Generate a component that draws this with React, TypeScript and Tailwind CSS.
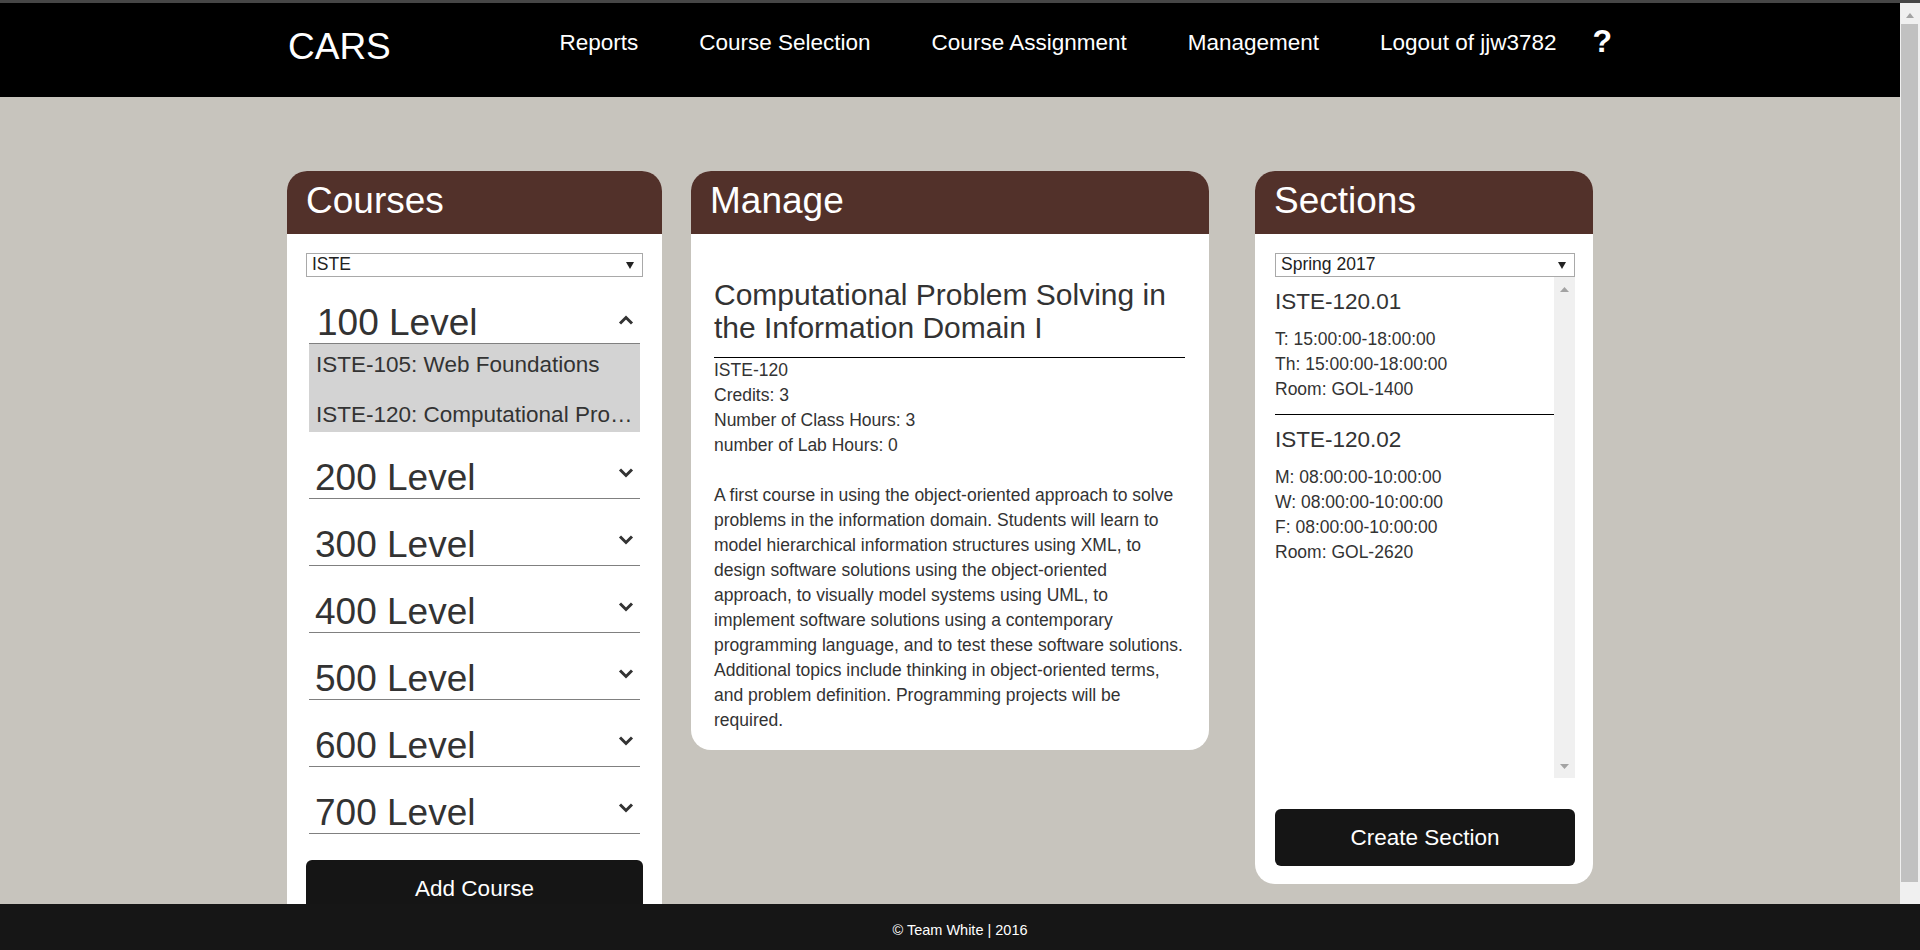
import React from "react";

const levels = ["200", "300", "400", "500", "600", "700"];

const description =
  "A first course in using the object-oriented approach to solve problems in the information domain. Students will learn to model hierarchical information structures using XML, to design software solutions using the object-oriented approach, to visually model systems using UML, to implement software solutions using a contemporary programming language, and to test these software solutions. Additional topics include thinking in object-oriented terms, and problem definition. Programming projects will be required.";

function Chevron({ up }: { up?: boolean }) {
  return (
    <svg
      width="16"
      height="10"
      viewBox="0 0 16 10"
      className={`mr-[6px] shrink-0 ${up ? "mb-[18px]" : "mb-[20px]"}`}
    >
      <polyline
        points={up ? "2,8.5 8,2.5 14,8.5" : "2,1.5 8,7.5 14,1.5"}
        fill="none"
        stroke="#333"
        strokeWidth="3"
      />
    </svg>
  );
}

function Select({ value }: { value: string }) {
  return (
    <div className="h-[24px] border border-[#a9a9a9] flex items-center justify-between pl-[5px] pr-[8px] text-[17.5px] leading-none text-[#222]">
      <span>{value}</span>
      <svg width="8" height="7" viewBox="0 0 8 7">
        <polygon points="0,0 8,0 4,7" fill="#222" />
      </svg>
    </div>
  );
}

function Arrow({ up }: { up?: boolean }) {
  return (
    <svg width="9" height="5" viewBox="0 0 9 5">
      <polygon points={up ? "0,5 9,5 4.5,0" : "0,0 9,0 4.5,5"} fill="#a3a3a3" />
    </svg>
  );
}

function Card({
  title,
  className,
  children,
}: {
  title: string;
  className?: string;
  children: React.ReactNode;
}) {
  return (
    <section className={`shrink-0 rounded-[20px] bg-white overflow-hidden ${className}`}>
      <h2 className="h-[63px] bg-[#52312a] text-white text-[37px] leading-[42px] pt-[9px] pl-[19px]">
        {title}
      </h2>
      {children}
    </section>
  );
}

function LevelRow({ label, open, pl }: { label: string; open?: boolean; pl: string }) {
  return (
    <div className="h-[67px] border-b border-[#808080] flex items-end justify-between">
      <span className={`text-[37px] leading-[37px] pb-[2px] ${pl}`}>{label} Level</span>
      <Chevron up={open} />
    </div>
  );
}

function Section({
  code,
  times,
  room,
  last,
}: {
  code: string;
  times: string[];
  room: string;
  last?: boolean;
}) {
  return (
    <div className={`pt-[10px] ${last ? "" : "pb-[12px] border-b border-black"}`}>
      <h3 className="text-[22.5px] leading-[30px] mb-[10px]">{code}</h3>
      {times.map((t) => (
        <p key={t} className="text-[17.5px] leading-[25px]">
          {t}
        </p>
      ))}
      <p className="text-[17.5px] leading-[25px]">Room: {room}</p>
    </div>
  );
}

export default function App() {
  return (
    <div className="h-screen flex flex-col overflow-hidden font-['Liberation_Sans',Arial,sans-serif] text-[#333]">
      <div className="h-[3px] bg-[#464646] shrink-0" />

      <div className="flex flex-1 min-h-0">
        <div className="flex-1 bg-[#c7c4bd] overflow-hidden">
          <header className="bg-black h-[94px]">
            <div className="w-[1324px] mx-auto flex items-start justify-between">
              <div className="text-white text-[37px] leading-[42px] mt-[23px]">CARS</div>
              <nav className="flex items-start">
                <ul className="flex gap-[61px] mt-[27px] text-white text-[22.5px] leading-[26px]">
                  <li>Reports</li>
                  <li>Course Selection</li>
                  <li>Course Assignment</li>
                  <li>Management</li>
                  <li>Logout of jjw3782</li>
                </ul>
                <span className="ml-[36px] mt-[20px] text-white text-[32px] leading-[36px] font-bold">
                  ?
                </span>
              </nav>
            </div>
          </header>

          <main className="w-[1324px] mx-auto pt-[74px] flex items-start">
            <Card title="Courses" className="w-[375px] -ml-[1px]">
              <div className="px-[19px] pt-[19px] pb-[18px]">
                <Select value="ISTE" />
                <div className="mx-[3px]">
                  <LevelRow label="100" open pl="pl-[8px]" />
                  <div className="h-[88px] bg-[#d3d3d3] overflow-hidden">
                    <div className="-mt-[4px] text-[22.5px] leading-[50px] pl-[7px] pr-[7px]">
                      <p className="truncate">ISTE-105: Web Foundations</p>
                      <p className="truncate">
                        ISTE-120: Computational Problem Solving in the Information Domain I
                      </p>
                    </div>
                  </div>
                  {levels.map((l) => (
                    <LevelRow key={l} label={l} pl="pl-[6px]" />
                  ))}
                </div>
                <button className="mt-[26px] w-full h-[57px] rounded-[6px] bg-[#151515] text-white text-[22.5px]">
                  Add Course
                </button>
              </div>
            </Card>

            <Card title="Manage" className="w-[518px] ml-[29px]">
              <div className="pl-[23px] pr-[24px] pt-[44px] pb-[17px]">
                <h3 className="text-[30px] leading-[33px] pb-[13px] border-b border-black">
                  Computational Problem Solving in the Information Domain I
                </h3>
                <div className="text-[17.5px] leading-[25px]">
                  <p>ISTE-120</p>
                  <p>Credits: 3</p>
                  <p>Number of Class Hours: 3</p>
                  <p>number of Lab Hours: 0</p>
                  <p className="mt-[25px]">{description}</p>
                </div>
              </div>
            </Card>

            <Card title="Sections" className="w-[338px] ml-[46px]">
              <div className="pl-[20px] pr-[18px] pt-[19px] pb-[18px]">
                <Select value="Spring 2017" />
                <div className="h-[501px] flex">
                  <div className="flex-1">
                    <Section
                      code="ISTE-120.01"
                      times={["T: 15:00:00-18:00:00", "Th: 15:00:00-18:00:00"]}
                      room="GOL-1400"
                    />
                    <Section
                      code="ISTE-120.02"
                      times={[
                        "M: 08:00:00-10:00:00",
                        "W: 08:00:00-10:00:00",
                        "F: 08:00:00-10:00:00",
                      ]}
                      room="GOL-2620"
                      last
                    />
                  </div>
                  <div className="w-[21px] bg-[#f0f0f0] flex flex-col items-center justify-between pt-[10px] pb-[9px]">
                    <Arrow up />
                    <Arrow />
                  </div>
                </div>
                <button className="mt-[31px] w-full h-[57px] rounded-[6px] bg-[#151515] text-white text-[22.5px]">
                  Create Section
                </button>
              </div>
            </Card>
          </main>
        </div>

        <div className="w-[20px] bg-[#f0f0f0] flex flex-col shrink-0">
          <div className="h-[21px] flex items-center justify-center pt-[3px]">
            <svg width="8" height="5" viewBox="0 0 8 5">
              <polygon points="0,5 8,5 4,0" fill="#a3a3a3" />
            </svg>
          </div>
          <div className="h-[858px] ml-[1px] w-[17px] bg-[#c1c1c1]" />
        </div>
      </div>

      <footer className="h-[46px] shrink-0 bg-[#161616] text-white text-[14.5px] flex justify-center pt-[18px] leading-[16px]">
        © Team White | 2016
      </footer>
    </div>
  );
}
